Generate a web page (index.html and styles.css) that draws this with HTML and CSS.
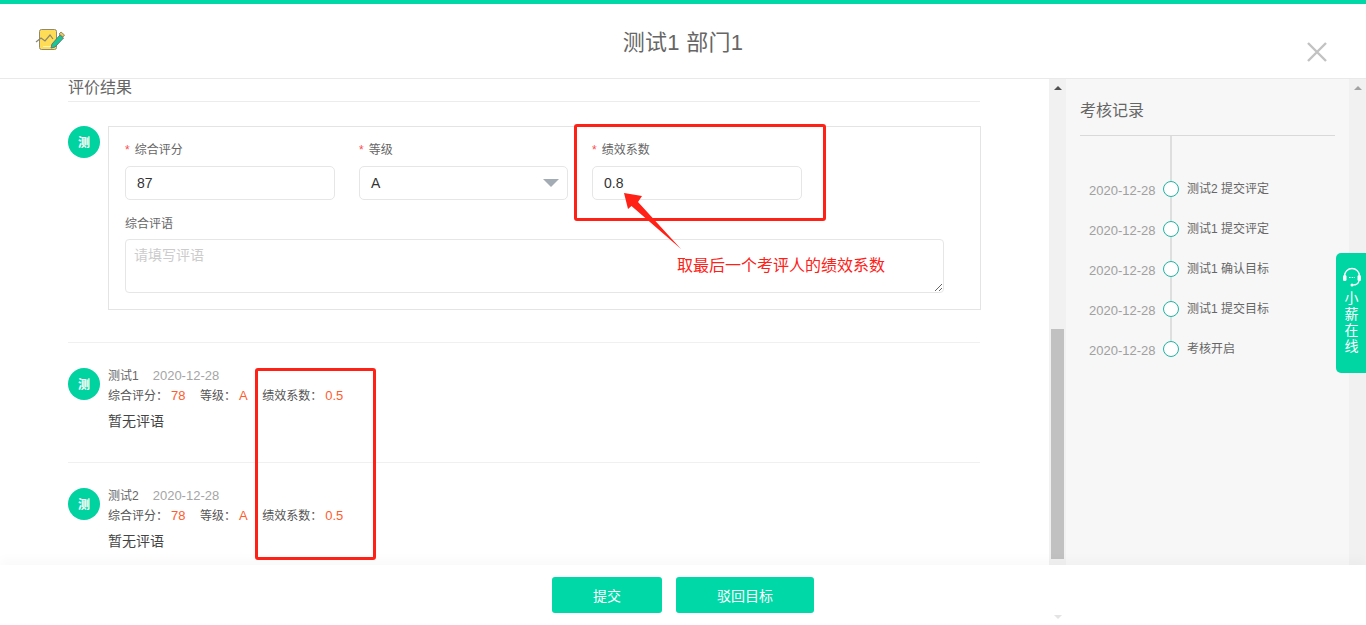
FILE: index.html
```html
<!DOCTYPE html>
<html lang="en">
<head>
    <meta charset="UTF-8">
    <meta name="viewport" content="width=device-width, initial-scale=1.0">
    <title>测试1 部门1</title>
    <link rel="stylesheet" href="styles.css">
</head>
<body>
  <div class="page">
    <header class="header">
      <svg class="logo" width="30" height="26" viewBox="0 0 30 26">
        <rect x="4.500" y="1.500" width="17" height="20" rx="2" fill="#ffdc55" stroke="#8f8a70"/>
        <path d="M1 14 L6 10 L10 13 L15 7 L18 11" fill="none" stroke="#8a8672" stroke-width="1.200"/>
        <path d="M8 18.500 H18" stroke="#fff3b8" stroke-width="1"/>
        <path d="M17 16 L25 7 L28.500 10 L20 19 L16 20 Z" fill="#17c79a" stroke="#5d7a68" stroke-width="1"/>
        <path d="M24 6 L26 4 L29.500 7 L28 9 Z" fill="#e8c95a" stroke="#7c7a60" stroke-width=".8"/>
      </svg>
      <h1 class="header-title">测试1 部门1</h1>
      <svg class="close" width="22" height="22" viewBox="0 0 22 22">
        <path d="M2 2 L20 20 M20 2 L2 20" stroke="#c2c2c2" stroke-width="2.400"/>
      </svg>
    </header>

    <div class="body">
      <main class="main">
        <div class="section-title">评价结果</div>

        <div class="mine">
          <div class="avatar">测</div>
          <div class="form-card">
            <div class="form-row">
              <div class="field">
                <label class="field-label"><i>*</i>综合评分</label>
                <input class="input" value="87">
              </div>
              <div class="field field-grade">
                <label class="field-label"><i>*</i>等级</label>
                <div class="input select">A</div>
              </div>
              <div class="field">
                <label class="field-label"><i>*</i>绩效系数</label>
                <input class="input" value="0.8">
              </div>
            </div>
            <label class="field-label plain">综合评语</label>
            <textarea class="textarea" placeholder="请填写评语"></textarea>
          </div>
        </div>

        <div class="comment">
          <div class="avatar">测</div>
          <div class="comment-body">
            <div class="comment-name">测试1<span class="comment-date">2020-12-28</span></div>
            <div class="comment-meta">
              <span>综合评分：<b>78</b></span>
              <span>等级：<b>A</b></span>
              <span>绩效系数：<b>0.5</b></span>
            </div>
            <div class="comment-text">暂无评语</div>
          </div>
        </div>

        <div class="comment">
          <div class="avatar">测</div>
          <div class="comment-body">
            <div class="comment-name">测试2<span class="comment-date">2020-12-28</span></div>
            <div class="comment-meta">
              <span>综合评分：<b>78</b></span>
              <span>等级：<b>A</b></span>
              <span>绩效系数：<b>0.5</b></span>
            </div>
            <div class="comment-text">暂无评语</div>
          </div>
        </div>
      </main>

      <div class="scrollbar">
        <div class="arrow-up dark"></div>
        <div class="thumb"></div>
        <div class="arrow-down"></div>
      </div>

      <aside class="side">
        <div class="side-title">考核记录</div>
        <div class="timeline">
          <div class="log"><span class="log-date">2020-12-28</span><span class="log-dot"></span><span class="log-text">测试2 提交评定</span></div>
          <div class="log"><span class="log-date">2020-12-28</span><span class="log-dot"></span><span class="log-text">测试1 提交评定</span></div>
          <div class="log"><span class="log-date">2020-12-28</span><span class="log-dot"></span><span class="log-text">测试1 确认目标</span></div>
          <div class="log"><span class="log-date">2020-12-28</span><span class="log-dot"></span><span class="log-text">测试1 提交目标</span></div>
          <div class="log"><span class="log-date">2020-12-28</span><span class="log-dot"></span><span class="log-text">考核开启</span></div>
        </div>
      </aside>

      <div class="scrollbar side-scroll">
        <div class="arrow-up"></div>
      </div>
    </div>

    <footer class="footer">
      <button class="btn btn-submit">提交</button>
      <button class="btn btn-reject">驳回目标</button>
    </footer>

    <!-- annotations drawn over the screenshot -->
    <div class="mark mark-a"></div>
    <div class="mark mark-b"></div>
    <svg class="mark-arrow" width="70" height="66" viewBox="0 0 70 66">
      <polygon points="1,5 19,8 15,14 58,61 8.500,18 5,21" fill="#ff2016"/>
    </svg>
    <div class="mark-text">取最后一个考评人的绩效系数</div>

    <div class="chat-tab">
      <svg width="20" height="20" viewBox="0 0 20 20">
        <path d="M2.500 11 V9 a7.500 7.500 0 0 1 15 0 V11" fill="none" stroke="#fff" stroke-width="1.300"/>
        <rect x="1" y="8" width="3.500" height="6" rx="1.500" fill="#fff"/>
        <rect x="15.500" y="8" width="3.500" height="6" rx="1.500" fill="#fff"/>
        <path d="M17 14 Q16 18 11 18" fill="none" stroke="#fff" stroke-width="1.200"/>
        <circle cx="10" cy="18" r="1.500" fill="#fff"/>
        <path d="M7 10.500 H13" stroke="#fff" stroke-width="1.200" stroke-dasharray="1.500 1.200"/>
      </svg>
      <span>小</span><span>薪</span><span>在</span><span>线</span>
    </div>
  </div>
</body>
</html>
```

FILE: styles.css
```css
* {
box-sizing: border-box;
}

html, body {
margin: 0;
height: 100%;
overflow: hidden;
}

body {
font-family: "Liberation Sans", "Noto Sans CJK SC", sans-serif;
color: #666;
background: #fff;
}

.page {
position: relative;
height: 625px;
display: flex;
flex-direction: column;
border-top: 4px solid #00d8a8;
overflow: hidden;
}

.header {
position: relative;
height: 75px;
flex: none;
display: flex;
justify-content: center;
padding-top: 24px;
border-bottom: 1px solid #e9e9e9;
}

.logo {
position: absolute;
left: 35px;
top: 24px;
}

.close {
position: absolute;
left: 1306px;
top: 37px;
}

.header-title {
margin: 0;
font-size: 22px;
font-weight: normal;
line-height: 30px;
letter-spacing: 0.3px;
color: #666;
}

.body {
flex: 1;
display: flex;
min-height: 0;
}

.main {
width: 1049px;
flex: none;
padding: 0 69px 0 68px;
overflow: hidden;
}

.section-title {
height: 23px;
line-height: 18px;
font-size: 16px;
color: #666;
border-bottom: 1px solid #ececec;
}

.mine {
display: flex;
gap: 8px;
margin-top: 24px;
padding-bottom: 32px;
}

.avatar {
width: 32px;
height: 32px;
flex: none;
border-radius: 50%;
background: #00d2a0;
color: #fff;
font-size: 12px;
font-weight: bold;
line-height: 34px;
text-align: center;
}

.form-card {
width: 873px;
height: 184px;
flex: none;
padding: 14px 16px 0;
border: 1px solid #e4e4e4;
}

.form-row {
display: flex;
gap: 24px;
}

.field {
width: 210px;
}

.field-grade {
width: 209px;
}

.field-label {
display: block;
height: 25px;
font-size: 12px;
line-height: 18px;
color: #666;
}

.field-label i {
margin-right: 5px;
color: #ff4d4f;
font-style: normal;
}

.field-label.plain {
margin-top: 15px;
height: 24px;
}

.input {
display: block;
width: 100%;
height: 34px;
padding: 0 11px;
border: 1px solid #e6e6e6;
border-radius: 5px;
font: 14px/32px "Liberation Sans", "Noto Sans CJK SC", sans-serif;
color: #333;
background: #fff;
}

.select {
position: relative;
}

.select::after {
content: "";
position: absolute;
right: 8px;
top: 12px;
border-style: solid;
border-width: 8px 8px 0;
border-color: #a3abb5 transparent transparent;
}

.textarea {
display: block;
width: 819px;
height: 54px;
padding: 5px 8px;
border: 1px solid #e6e6e6;
border-radius: 4px;
font: 14px/20px "Liberation Sans", "Noto Sans CJK SC", sans-serif;
resize: both;
}

.textarea::placeholder {
color: #ccc;
}

.comment {
display: flex;
gap: 8px;
height: 120px;
padding-top: 26px;
border-top: 1px solid #f0f0f0;
}

.comment .avatar {
margin-top: -1px;
}

.comment-name {
height: 14px;
font-size: 12px;
line-height: 14px;
color: #666;
}

.comment-date {
margin-left: 14px;
font-size: 13px;
color: #a5a5a5;
}

.comment-meta {
display: flex;
gap: 14.500px;
margin-top: 3px;
height: 20px;
font-size: 12px;
line-height: 20px;
color: #555;
}

.comment-meta b {
margin-left: 3px;
font-size: 13px;
font-weight: normal;
color: #ff5c2e;
}

.comment-text {
margin-top: 5px;
font-size: 14px;
line-height: 20px;
color: #444;
}

.scrollbar {
width: 17px;
flex: none;
background: #f1f1f1;
position: relative;
display: flex;
flex-direction: column;
align-items: center;
}

.thumb {
position: absolute;
top: 250px;
left: 2px;
width: 13px;
height: 230px;
background: #c1c1c1;
}

.arrow-up {
margin-top: 7px;
border-style: solid;
border-width: 0 4px 4px;
border-color: transparent transparent #a3a3a3;
}

.arrow-up.dark {
border-bottom-color: #505050;
}

.arrow-down {
position: absolute;
bottom: 6px;
left: 5px;
border-style: solid;
border-width: 4px 4px 0;
border-color: #e4e4e4 transparent transparent;
z-index: 3;
}

.side {
width: 283px;
flex: none;
padding: 0 14px;
background: #f7f7f7;
}

.side-title {
height: 57px;
padding-top: 21px;
font-size: 16px;
line-height: 22px;
color: #666;
border-bottom: 1px solid #d9d9d9;
}

.timeline {
position: relative;
padding: 33px 0 0 9px;
}

.timeline::before {
content: "";
position: absolute;
left: 90px;
top: 0;
width: 2px;
height: 214px;
background: #dedede;
}

.log {
position: relative;
display: flex;
align-items: center;
height: 40px;
}

.log-date {
width: 74px;
font-size: 13px;
line-height: 40px;
padding-top: 3px;
color: #a0a0a0;
}

.log-dot {
width: 16px;
height: 16px;
flex: none;
border: 1.500px solid #1cb5a3;
border-radius: 50%;
background: #fff;
}

.log-text {
margin-left: 8px;
padding-bottom: 3px;
font-size: 12px;
color: #666;
}

.footer {
position: absolute;
left: 0;
right: 0;
bottom: 0;
height: 60px;
display: flex;
justify-content: center;
align-items: flex-start;
gap: 14px;
padding-top: 12px;
background: #fff;
box-shadow: 0 -6px 10px rgba(0, 0, 0, 0.025);
}

.btn {
height: 36px;
border: 0;
border-radius: 3px;
background: #00d8a8;
color: #fff;
font: 14px "Liberation Sans", "Noto Sans CJK SC", sans-serif;
}

.btn-submit {
width: 110px;
}

.btn-reject {
width: 138px;
}

.mark {
position: absolute;
border: 3px solid #ff2016;
border-radius: 3px;
}

.mark-a {
left: 574px;
top: 120px;
width: 252px;
height: 97px;
}

.mark-b {
left: 255px;
top: 364px;
width: 121px;
height: 192px;
}

.mark-arrow {
position: absolute;
left: 623px;
top: 184px;
margin-top: 0;
}

.mark-text {
position: absolute;
left: 677px;
top: 251px;
font-size: 16px;
line-height: 22px;
color: #ff2016;
}

.chat-tab {
position: absolute;
left: 1336px;
top: 249px;
width: 30px;
height: 120px;
display: flex;
flex-direction: column;
align-items: center;
padding: 14px 0 0 1px;
border-radius: 5px 0 0 5px;
background: #00d6a3;
color: #fff;
font-size: 14px;
line-height: 16px;
}

.chat-tab svg {
margin-bottom: 3px;
}
```
